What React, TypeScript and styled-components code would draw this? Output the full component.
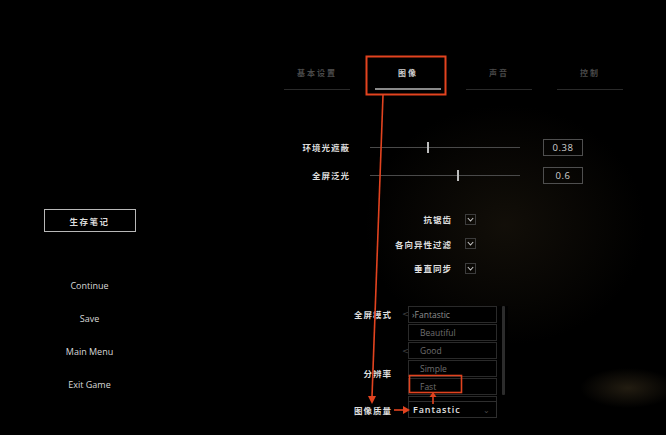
import React from "react";
import styled, { createGlobalStyle } from "styled-components";

const GlobalStyle = createGlobalStyle`
  html, body { margin: 0; padding: 0; background: #000; }
  body { font-family: "Open Sans", "Noto Sans CJK SC", sans-serif; }
  * { box-sizing: border-box; }
`;

const CJK = `"Noto Sans CJK SC", "Noto Sans", sans-serif`;

const Page = styled.div`
  position: relative;
  width: 666px;
  height: 435px;
  overflow: hidden;
  display: flex;
  background:
    radial-gradient(ellipse 48px 20px at 628px 388px, rgba(40, 33, 20, 0.85), rgba(0,0,0,0) 100%),
    radial-gradient(ellipse 140px 120px at 505px 225px, rgba(30, 24, 14, 0.6), rgba(0,0,0,0) 100%),
    #000;
`;

const LeftColumn = styled.div`
  width: 179px;
  display: flex;
  flex-direction: column;
  align-items: center;
  padding-top: 209px;
`;

const NoteButton = styled.div`
  width: 92px;
  height: 23px;
  border: 1px solid #b8b8b8;
  display: flex;
  align-items: center;
  justify-content: center;
  font-family: ${CJK};
  font-size: 8.5px;
  font-weight: 700;
  letter-spacing: 1.5px;
  color: #dcdcdc;
`;

const MenuList = styled.div`
  margin-top: 37px;
  display: flex;
  flex-direction: column;
  align-items: center;
`;

const MenuItem = styled.div`
  height: 33px;
  line-height: 33px;
  font-family: "Open Sans", sans-serif;
  font-size: 9px;
  color: #d8d8d8;
`;

const RightPanel = styled.div`
  flex: 1;
  padding-left: 105px;
  padding-top: 66px;
  display: flex;
  flex-direction: column;
`;

const TabRow = styled.div`
  display: flex;
  gap: 25px;
`;

const Tab = styled.div`
  width: 66px;
  display: flex;
  flex-direction: column;
  align-items: center;
`;

const TabLabel = styled.div<{ $active?: boolean }>`
  height: 14px;
  line-height: 14px;
  font-family: ${CJK};
  font-size: 8px;
  font-weight: 700;
  letter-spacing: 2px;
  color: ${(p) => (p.$active ? "#cfcfcf" : "#4a4a4a")};
`;

const TabLine = styled.div<{ $active?: boolean }>`
  margin-top: ${(p) => (p.$active ? "8px" : "9px")};
  width: 100%;
  height: ${(p) => (p.$active ? "2px" : "1px")};
  background: ${(p) => (p.$active ? "#8a8a8a" : "#2a2a2a")};
`;

const SliderGrid = styled.div`
  margin-top: 43px;
  display: grid;
  grid-template-columns: 66px 150px 40px;
  grid-auto-rows: 28px;
  column-gap: 20px;
  align-items: center;
`;

const Label = styled.div`
  text-align: right;
  font-family: ${CJK};
  font-size: 8.5px;
  font-weight: 700;
  letter-spacing: 1px;
  color: #dedede;
  white-space: nowrap;
`;

const Track = styled.div`
  position: relative;
  height: 1px;
  background: #4a4a4a;
`;

const Handle = styled.div`
  position: absolute;
  top: -5px;
  width: 2px;
  height: 11px;
  background: #bdbdbd;
`;

const ValueBox = styled.div`
  margin-left: 3px;
  width: 40px;
  height: 17px;
  border: 1px solid #4f4f4f;
  display: flex;
  align-items: center;
  justify-content: center;
  font-family: "Open Sans", sans-serif;
  font-size: 9.5px;
  letter-spacing: 0.5px;
  color: #d0d0d0;
`;

const CheckGrid = styled.div`
  margin-top: 18px;
  display: grid;
  grid-template-columns: 168px 10px;
  grid-auto-rows: 24.5px;
  column-gap: 13px;
  align-items: center;
`;

const CheckBox = styled.div`
  width: 11px;
  height: 11px;
  border: 1px solid #3c3c3c;
  display: flex;
  align-items: center;
  justify-content: center;
`;

const LowerSection = styled.div`
  display: flex;
  flex-direction: column;
`;

const OptionRow = styled.div<{ $gap: number }>`
  margin-top: ${(p) => p.$gap}px;
  height: 20px;
  display: grid;
  grid-template-columns: 108px 1fr;
  column-gap: 10px;
  align-items: center;
`;

const Stepper = styled.div`
  width: 106px;
  height: 20px;
  display: flex;
  align-items: center;
  justify-content: space-between;
  font-family: "DejaVu Sans", sans-serif;
  font-size: 9px;
  color: #3e3e3e;
`;

const QualitySelect = styled.div`
  position: relative;
  margin-left: 6px;
  width: 89px;
  height: 17px;
  border: 1px solid #2e2e2e;
  display: flex;
  align-items: center;
  justify-content: space-between;
  padding: 0 6px 0 4px;
`;

const SelectValue = styled.span`
  font-family: "Open Sans", sans-serif;
  font-weight: 600;
  font-size: 9px;
  letter-spacing: 0.9px;
  color: #e2e2e2;
`;

const Chevron = styled.span`
  color: #4a4a4a;
  font-size: 8px;
`;

const DropList = styled.div`
  position: absolute;
  left: -1px;
  bottom: calc(100% + 1px);
  width: 100px;
  height: 95px;
  overflow: hidden;
  display: flex;
  flex-direction: column;
  gap: 1px;
  background: #000;
`;

const DropItem = styled.div<{ $selected?: boolean }>`
  flex: none;
  width: 89px;
  height: 17px;
  border: 1px solid #2a2a2a;
  display: flex;
  align-items: center;
  padding-left: ${(p) => (p.$selected ? "3px" : "11px")};
  font-family: "Open Sans", sans-serif;
  font-weight: 400;
  font-size: 8.5px;
  letter-spacing: 0;
  color: ${(p) => (p.$selected ? "#8f8f8f" : "#6f6f6f")};
`;

const ScrollBar = styled.div`
  position: absolute;
  left: 94px;
  top: 0;
  width: 3px;
  height: 89px;
  background: #2c2c2c;
  border-radius: 1px;
`;

const Overlay = styled.svg`
  position: absolute;
  left: 0;
  top: 0;
  pointer-events: none;
`;

const Check = () => (
  <svg width="7" height="5" viewBox="0 0 7 5">
    <path d="M0.8 1 L3.5 4 L6.2 1" fill="none" stroke="#c8c8c8" strokeWidth="1.1" />
  </svg>
);

const tabs = [
  { label: "基本设置" },
  { label: "图像", active: true },
  { label: "声音" },
  { label: "控制" },
];

const sliders = [
  { label: "环境光遮蔽", pos: 58, value: "0.38" },
  { label: "全屏泛光", pos: 88, value: "0.6" },
];

const checks = ["抗锯齿", "各向异性过滤", "垂直同步"];
const menu = ["Continue", "Save", "Main Menu", "Exit Game"];
const qualities = ["Fantastic", "Beautiful", "Good", "Simple", "Fast", ""];

export default function App() {
  const red = "#e2431f";
  return (
    <>
      <GlobalStyle />
      <Page>
        <LeftColumn>
          <NoteButton>生存笔记</NoteButton>
          <MenuList>
            {menu.map((m) => (
              <MenuItem key={m}>{m}</MenuItem>
            ))}
          </MenuList>
        </LeftColumn>
        <RightPanel>
          <TabRow>
            {tabs.map((t) => (
              <Tab key={t.label}>
                <TabLabel $active={t.active}>{t.label}</TabLabel>
                <TabLine $active={t.active} />
              </Tab>
            ))}
          </TabRow>

          <SliderGrid>
            {sliders.map((s) => (
              <React.Fragment key={s.label}>
                <Label>{s.label}</Label>
                <Track>
                  <Handle style={{ left: s.pos - 1 }} />
                </Track>
                <ValueBox>{s.value}</ValueBox>
              </React.Fragment>
            ))}
          </SliderGrid>

          <CheckGrid>
            {checks.map((c) => (
              <React.Fragment key={c}>
                <Label>{c}</Label>
                <CheckBox>
                  <Check />
                </CheckBox>
              </React.Fragment>
            ))}
          </CheckGrid>

          <LowerSection>
            <OptionRow $gap={23}>
              <Label>全屏模式</Label>
              <Stepper>
                <span>&lt;</span>
                <span>&gt;</span>
              </Stepper>
            </OptionRow>
            <OptionRow $gap={17}>
              <span />
              <Stepper>
                <span>&lt;</span>
                <span>&gt;</span>
              </Stepper>
            </OptionRow>
            <OptionRow $gap={2}>
              <Label>分辨率</Label>
              <span />
            </OptionRow>
            <OptionRow $gap={17}>
              <Label>图像质量</Label>
              <div>
                <QualitySelect>
                  <SelectValue>Fantastic</SelectValue>
                  <Chevron>⌄</Chevron>
                  <DropList>
                    {qualities.map((q, i) => (
                      <DropItem key={i} $selected={i === 0}>
                        {i === 0 ? `›${q}` : q}
                      </DropItem>
                    ))}
                    <ScrollBar />
                  </DropList>
                </QualitySelect>
              </div>
            </OptionRow>
          </LowerSection>
        </RightPanel>

        <Overlay width="666" height="435" viewBox="0 0 666 435">
          <rect x="366.5" y="56.5" width="79" height="38" fill="none" stroke={red} strokeWidth="2" />
          <line x1="383" y1="95" x2="372" y2="397" stroke={red} strokeWidth="1.6" />
          <polygon points="368,396 376,396 372,404" fill={red} />
          <line x1="394" y1="410" x2="404" y2="410" stroke={red} strokeWidth="1.6" />
          <polygon points="403,406 403,414 410,410" fill={red} />
          <rect x="409.5" y="375.5" width="52" height="17" fill="none" stroke={red} strokeWidth="1.6" />
          <line x1="433" y1="404" x2="433" y2="396" stroke={red} strokeWidth="1.6" />
          <polygon points="429.5,397 436.5,397 433,392" fill={red} />
        </Overlay>
      </Page>
    </>
  );
}
